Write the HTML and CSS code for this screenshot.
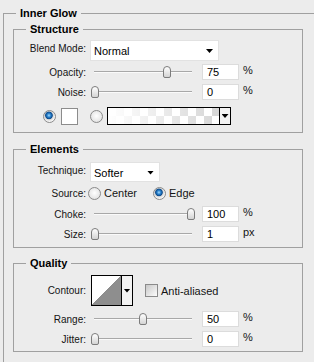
FILE: index.html
```html
<!DOCTYPE html>
<html lang="en">
<head>
  <meta charset="UTF-8" />
  <title>Inner Glow</title>
  <link rel="stylesheet" href="styles.css">
</head>
<body>
  <div class="group outer">
    <div class="title">Inner Glow</div>

    <div class="group box structure">
      <div class="title">Structure</div>
      <div class="row row-select">
        <label class="lbl">Blend Mode:</label>
        <div class="select blend"><span>Normal</span><i class="arrow"></i></div>
      </div>
      <div class="row row-field r-opacity">
        <label class="lbl">Opacity:</label>
        <div class="slider"><div class="track"></div><div class="thumb" style="left:73px"></div></div>
        <div class="field">75</div><span class="unit">%</span>
      </div>
      <div class="row row-field r-noise">
        <label class="lbl">Noise:</label>
        <div class="slider"><div class="track"></div><div class="thumb" style="left:1px"></div></div>
        <div class="field">0</div><span class="unit">%</span>
      </div>
      <div class="row row-color">
        <div class="lbl-cell">
          <span class="radio on"></span>
          <span class="swatch"></span>
        </div>
        <span class="radio"></span>
        <div class="gradient"><span class="grad"></span><span class="grad-btn"><i class="arrow"></i></span></div>
      </div>
    </div>

    <div class="group box elements">
      <div class="title">Elements</div>
      <div class="row row-select r-technique">
        <label class="lbl">Technique:</label>
        <div class="select technique"><span>Softer</span><i class="arrow"></i></div>
      </div>
      <div class="row r-source">
        <label class="lbl">Source:</label>
        <span class="radio src-center"></span><span class="opt">Center</span>
        <span class="radio on src-edge"></span><span class="opt">Edge</span>
      </div>
      <div class="row row-field r-choke">
        <label class="lbl">Choke:</label>
        <div class="slider"><div class="track"></div><div class="thumb" style="left:97px"></div></div>
        <div class="field">100</div><span class="unit">%</span>
      </div>
      <div class="row row-field r-size">
        <label class="lbl">Size:</label>
        <div class="slider"><div class="track"></div><div class="thumb" style="left:1px"></div></div>
        <div class="field">1</div><span class="unit">px</span>
      </div>
    </div>

    <div class="group box quality">
      <div class="title">Quality</div>
      <div class="row r-contour">
        <label class="lbl">Contour:</label>
        <div class="contour"><span class="curve"></span><span class="contour-btn"><i class="arrow"></i></span></div>
        <span class="check"></span><span class="opt">Anti-aliased</span>
      </div>
      <div class="row row-field r-range">
        <label class="lbl">Range:</label>
        <div class="slider"><div class="track"></div><div class="thumb" style="left:49px"></div></div>
        <div class="field">50</div><span class="unit">%</span>
      </div>
      <div class="row row-field r-jitter">
        <label class="lbl">Jitter:</label>
        <div class="slider"><div class="track"></div><div class="thumb" style="left:1px"></div></div>
        <div class="field">0</div><span class="unit">%</span>
      </div>
    </div>
  </div>
</body>
</html>
```

FILE: styles.css
```css
:root {
  --bg: #ececec;
  --line: #a0a0a0;
  --text: #141414;
}
* {
  margin: 0;
  padding: 0;
  box-sizing: border-box;
}
html, body {
  overflow: hidden;
}
body {
  background: var(--bg);
  color: var(--text);
  font-family: "Liberation Sans", Arial, sans-serif;
  font-size: 10px;
}
.group {
  border: 1px solid var(--line);
}
.outer {
  margin: 13px 0 0 3px;
  border-width: 1px 0 0 1px;
  padding: 0 0 20px 9px;
}
.title {
  width: max-content;
  margin: -7px 0 0 12px;
  padding: 0 4px;
  background: var(--bg);
  color: #000;
  font-size: 11px;
  font-weight: bold;
  line-height: 13px;
}
.outer > .title {
  margin-left: 3px;
}
.box {
  width: 290px;
}
.structure {
  margin-top: 9px;
  padding-bottom: 7px;
}
.elements {
  margin-top: 16px;
  padding-bottom: 5px;
}
.quality {
  margin-top: 15px;
  padding-bottom: 4px;
}

/* rows */
.row {
  display: flex;
  align-items: center;
  height: 16px;
}
.lbl {
  width: 72px;
  margin-right: 4px;
  text-align: right;
  flex-shrink: 0;
}
.row-select {
  height: 21px;
  margin-top: 4px;
  align-items: flex-start;
}
.row-select .lbl {
  padding-top: 3px;
}
.r-opacity { margin-top: 3px; }
.r-noise { margin-top: 4px; }
.row-color {
  height: 18px;
  margin-top: 7px;
}
.r-technique {
  height: 20px;
  margin-top: 6px;
}
.r-source { margin-top: 3px; }
.r-choke { margin-top: 5px; }
.r-size { margin-top: 4px; }
.r-contour {
  height: 31px;
  margin-top: 5px;
}
.r-range { margin-top: 5px; }
.r-jitter { margin-top: 4px; }

/* dropdowns */
.select {
  display: flex;
  align-items: center;
  justify-content: space-between;
  height: 100%;
  padding: 1px 5px 0 3px;
  background: #fff;
  border: 1px solid #e2e2e2;
  font-size: 11px;
  color: #000;
}
.blend { width: 129px; }
.technique { width: 70px; }
.arrow {
  display: block;
  width: 7px;
  height: 4px;
  background: #000;
  clip-path: polygon(0 0, 100% 0, 50% 100%);
}

/* sliders */
.slider {
  position: relative;
  width: 112px;
  height: 16px;
  flex-shrink: 0;
}
.track {
  width: 98px;
  height: 2px;
  margin: 7px 0 0 4px;
  border-top: 1px solid #a8a8a8;
  border-bottom: 1px solid #fafafa;
}
.thumb {
  position: absolute;
  top: 2px;
  width: 8px;
  height: 12px;
  border: 1px solid #7c7c7c;
  border-radius: 4px 4px 2px 2px;
  background: linear-gradient(#ffffff, #d4d4d4);
}
.field {
  width: 37px;
  height: 16px;
  padding: 1px 0 0 4px;
  background: #fff;
  border: 1px solid #dcdcdc;
  line-height: 13px;
  color: #000;
  font-size: 11px;
}
.unit {
  margin-left: 4px;
  align-self: flex-start;
  font-size: 11px;
  line-height: 12px;
}

/* radios, swatches */
.lbl-cell {
  display: flex;
  align-items: center;
  width: 72px;
  margin-right: 4px;
}
.radio {
  display: block;
  width: 13px;
  height: 13px;
  border-radius: 50%;
  border: 1px solid #8a8a8a;
  background: radial-gradient(circle at 50% 45%, #ffffff 0, #e4e4e4 6px);
  flex-shrink: 0;
}
.radio.on {
  background: radial-gradient(circle at 45% 40%, #a6dcff 0, #2d85cf 1.8px, #0b4a8c 3.4px, #d6d6d6 4.2px, #f6f6f6 6px);
}
.lbl-cell .radio {
  margin-left: 29px;
}
.swatch {
  display: block;
  width: 17px;
  height: 17px;
  margin-left: 5px;
  background: #fff;
  border: 1px solid #8c8c8c;
}
.gradient {
  display: flex;
  width: 124px;
  height: 18px;
  margin-left: 4px;
  border: 1px solid #000;
}
.grad {
  flex: 1;
  background:
    linear-gradient(to right, #fff, rgba(255, 255, 255, 0.15)),
    repeating-conic-gradient(#cfcfcf 0 25%, #fff 0 50%) 0 0 / 16px 16px;
}
.grad-btn, .contour-btn {
  display: flex;
  align-items: center;
  justify-content: center;
  width: 11px;
  border-left: 1px solid #000;
  background: #f2f2f2;
}
.src-center {
  margin-left: -2px;
}
.src-edge {
  margin-left: 16px;
}
.opt {
  margin-left: 3px;
  font-size: 11px;
}

/* contour */
.contour {
  display: flex;
  width: 42px;
  height: 31px;
  margin-left: 1px;
  border: 1px solid #000;
}
.curve {
  flex: 1;
  background: linear-gradient(to bottom right, #fff 50%, #8e8e8e 50%);
}
.check {
  display: block;
  width: 13px;
  height: 13px;
  margin-left: 12px;
  border: 1px solid #8a8a8a;
  background: linear-gradient(135deg, #c8c8c8, #fcfcfc);
}
```
